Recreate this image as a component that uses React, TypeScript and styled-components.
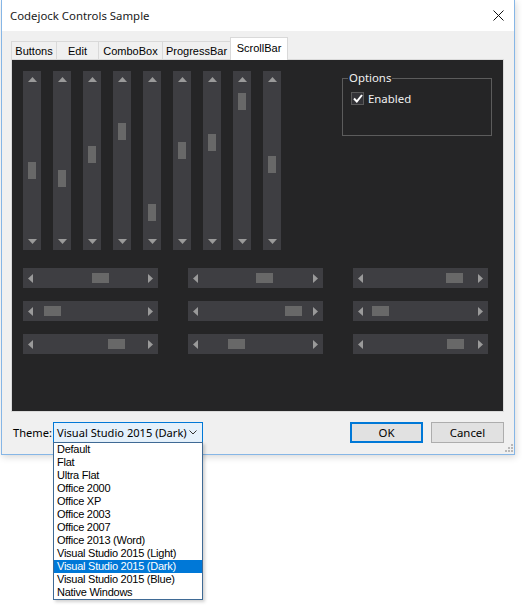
import React from "react";
import styled, { createGlobalStyle } from "styled-components";

const GlobalStyle = createGlobalStyle`
  html, body { margin: 0; padding: 0; background: #ffffff; }
  body { font-family: "Noto Sans", "Liberation Sans", sans-serif; }
`;

const UI = `"Noto Sans", "Open Sans", sans-serif`;
const DLG = `"Liberation Sans", Arial, sans-serif`;

const Page = styled.div`
  padding-left: 1px;
  min-height: 608px;
  box-sizing: border-box;
`;

const Window = styled.div`
  position: relative;
  width: 512px;
  border: 1px solid #86b6e6;
  border-top: none;
  background: #f0f0f0;
  box-shadow: 1px 2px 7px rgba(0, 0, 0, 0.16);
`;

const TitleBar = styled.div`
  height: 31px;
  background: #ffffff;
  display: flex;
  align-items: center;
  justify-content: space-between;
  padding: 0 10px 0 8px;
`;

const Title = styled.span`
  font-family: ${UI};
  font-size: 11.4px;
  color: #1a1a1a;
`;

const CloseGlyph = styled.svg`
  width: 11px;
  height: 11px;
  display: block;
`;

const Body = styled.div`
  padding: 6px 10px 0 9px;
`;

const TabStrip = styled.div`
  display: flex;
  align-items: flex-end;
  height: 23px;
  position: relative;
  z-index: 1;
  margin-bottom: -1px;
`;

const Tab = styled.div<{ $w: number; $active?: boolean }>`
  width: ${(p) => p.$w}px;
  height: ${(p) => (p.$active ? 23 : 19)}px;
  box-sizing: border-box;
  border: 1px solid #d9d9d9;
  border-left-width: ${(p) => (p.$active ? 1 : 0)}px;
  border-bottom: ${(p) => (p.$active ? "none" : "1px solid #d9d9d9")};
  background: ${(p) => (p.$active ? "#ffffff" : "#f0f0f0")};
  margin: ${(p) => (p.$active ? "0 -1px 0 -1px" : "0")};
  font-family: ${DLG};
  font-size: 11px;
  color: #000;
  display: flex;
  align-items: center;
  justify-content: center;
  padding-bottom: ${(p) => (p.$active ? 3 : 0)}px;
  &:first-child {
    border-left-width: 1px;
  }
`;

const TabPanel = styled.div`
  border: 1px solid #dadada;
  background: #ffffff;
`;

const DarkArea = styled.div`
  height: 351px;
  background: #252526;
  box-sizing: border-box;
  padding: 11px 0 0 11px;
  display: flex;
  flex-direction: column;
  gap: 18px;
`;

const TopRow = styled.div`
  display: flex;
  align-items: flex-start;
`;

const VGroup = styled.div`
  display: flex;
  gap: 12px;
`;

const VBar = styled.div`
  width: 18px;
  height: 179px;
  background: #3e3e42;
  display: flex;
  flex-direction: column;
`;

const ArrowBox = styled.div<{ $dir: "v" | "h" }>`
  flex: 0 0 ${(p) => (p.$dir === "v" ? 17 : 15)}px;
  display: flex;
  align-items: center;
  justify-content: center;
`;

const Track = styled.div`
  flex: 1;
  position: relative;
`;

const VThumb = styled.div`
  position: absolute;
  left: 5px;
  width: 8px;
  height: 17px;
  background: #686868;
`;

const HBar = styled.div`
  width: 135px;
  height: 20px;
  background: #3e3e42;
  display: flex;
`;

const HThumb = styled.div`
  position: absolute;
  top: 5px;
  width: 17px;
  height: 10px;
  background: #686868;
`;

const HGrid = styled.div`
  display: grid;
  grid-template-columns: repeat(3, 135px);
  column-gap: 30px;
  row-gap: 13px;
`;

const Group = styled.fieldset`
  margin: 0 0 0 61px;
  width: 150px;
  height: 65px;
  box-sizing: border-box;
  border: 1px solid #5c5c5c;
  padding: 6px 0 0 5px;
  min-width: 0;
`;

const Legend = styled.legend`
  font-family: ${UI};
  font-size: 11.4px;
  line-height: 14px;
  color: #f1f1f1;
  padding: 0 1px;
  margin-left: 0;
`;

const CheckRow = styled.label`
  display: flex;
  align-items: center;
  gap: 4px;
  margin-left: 3px;
  font-family: ${UI};
  font-size: 11.4px;
  color: #f1f1f1;
`;

const CheckBox = styled.span`
  width: 13px;
  height: 13px;
  box-sizing: border-box;
  border: 1px solid #5a5a5a;
  background: #333337;
  display: flex;
  align-items: center;
  justify-content: center;
`;

const BottomBar = styled.div`
  display: flex;
  align-items: center;
  padding: 10px 0 11px 2px;
  height: 21px;
  box-sizing: content-box;
`;

const Label = styled.span`
  flex: 0 0 40px;
  font-family: ${UI};
  font-size: 11.1px;
  color: #000;
`;

const ComboWrap = styled.div`
  position: relative;
  flex: 0 0 150px;
  height: 21px;
`;

const Combo = styled.div`
  height: 100%;
  box-sizing: border-box;
  border: 1px solid #0078d7;
  background: #e5f1fb;
  display: flex;
  align-items: center;
  justify-content: space-between;
  padding: 0 5px 0 3px;
  font-family: ${UI};
  font-size: 11.1px;
  white-space: nowrap;
  color: #000;
`;

const List = styled.div`
  position: absolute;
  left: 0;
  top: 20px;
  width: 150px;
  box-sizing: border-box;
  border: 1px solid #3f6a95;
  background: #ffffff;
  box-shadow: 2px 2px 3px rgba(0, 0, 0, 0.18);
  z-index: 5;
`;

const ListItem = styled.div<{ $selected?: boolean }>`
  height: 13px;
  line-height: 13px;
  padding-left: 3px;
  font-family: ${DLG};
  font-size: 11px;
  letter-spacing: -0.25px;
  white-space: nowrap;
  background: ${(p) => (p.$selected ? "#0078d7" : "transparent")};
  color: ${(p) => (p.$selected ? "#ffffff" : "#000000")};
`;

const Spacer = styled.div`
  flex: 1;
`;

const Button = styled.div<{ $default?: boolean }>`
  width: 73px;
  height: 21px;
  box-sizing: border-box;
  border: ${(p) => (p.$default ? "2px solid #0078d7" : "1px solid #adadad")};
  background: #e1e1e1;
  display: flex;
  align-items: center;
  justify-content: center;
  font-family: ${UI};
  font-size: 11.4px;
  color: #000;
  margin-left: 8px;
`;

const Grip = styled.svg`
  position: absolute;
  right: 1px;
  bottom: 2px;
  width: 8px;
  height: 8px;
`;

const ARROW = "#9a9a9a";

const Up = () => (
  <svg width="9" height="5" viewBox="0 0 9 5">
    <polygon points="4.5,0 9,5 0,5" fill={ARROW} />
  </svg>
);
const Down = () => (
  <svg width="9" height="5" viewBox="0 0 9 5">
    <polygon points="0,0 9,0 4.5,5" fill={ARROW} />
  </svg>
);
const Left = () => (
  <svg width="5" height="9" viewBox="0 0 5 9">
    <polygon points="5,0 5,9 0,4.5" fill={ARROW} />
  </svg>
);
const Right = () => (
  <svg width="5" height="9" viewBox="0 0 5 9">
    <polygon points="0,0 5,4.5 0,9" fill={ARROW} />
  </svg>
);

const verticalOffsets = [91, 99, 75, 52, 133, 71, 63, 22, 85];
const horizontalOffsets = [69, 68, 93, 21, 97, 19, 85, 40, 94];

const tabs = [
  { label: "Buttons", w: 46 },
  { label: "Edit", w: 42 },
  { label: "ComboBox", w: 64 },
  { label: "ProgressBar", w: 68 },
  { label: "ScrollBar", w: 58, active: true },
];

const themes = [
  "Default",
  "Flat",
  "Ultra Flat",
  "Office 2000",
  "Office XP",
  "Office 2003",
  "Office 2007",
  "Office 2013 (Word)",
  "Visual Studio 2015 (Light)",
  "Visual Studio 2015 (Dark)",
  "Visual Studio 2015 (Blue)",
  "Native Windows",
];

function VerticalScroll({ pos }: { pos: number }) {
  return (
    <VBar>
      <ArrowBox $dir="v">
        <Up />
      </ArrowBox>
      <Track>
        <VThumb style={{ top: pos - 17 }} />
      </Track>
      <ArrowBox $dir="v">
        <Down />
      </ArrowBox>
    </VBar>
  );
}

function HorizontalScroll({ pos }: { pos: number }) {
  return (
    <HBar>
      <ArrowBox $dir="h">
        <Left />
      </ArrowBox>
      <Track>
        <HThumb style={{ left: pos - 15 }} />
      </Track>
      <ArrowBox $dir="h">
        <Right />
      </ArrowBox>
    </HBar>
  );
}

export default function App() {
  return (
    <Page>
      <GlobalStyle />
      <Window>
        <TitleBar>
          <Title>Codejock Controls Sample</Title>
          <CloseGlyph viewBox="0 0 11 11">
            <path d="M0.5 0.5 L10.5 10.5 M10.5 0.5 L0.5 10.5" stroke="#111" strokeWidth="1" />
          </CloseGlyph>
        </TitleBar>
        <Body>
          <TabStrip>
            {tabs.map((t) => (
              <Tab key={t.label} $w={t.w} $active={t.active}>
                {t.label}
              </Tab>
            ))}
          </TabStrip>
          <TabPanel>
            <DarkArea>
              <TopRow>
                <VGroup>
                  {verticalOffsets.map((p, i) => (
                    <VerticalScroll key={i} pos={p} />
                  ))}
                </VGroup>
                <Group>
                  <Legend>Options</Legend>
                  <CheckRow>
                    <CheckBox>
                      <svg width="10" height="9" viewBox="0 0 10 9">
                        <path d="M1 4.5 L3.8 7.5 L9 1" stroke="#ffffff" strokeWidth="2" fill="none" />
                      </svg>
                    </CheckBox>
                    Enabled
                  </CheckRow>
                </Group>
              </TopRow>
              <HGrid>
                {horizontalOffsets.map((p, i) => (
                  <HorizontalScroll key={i} pos={p} />
                ))}
              </HGrid>
            </DarkArea>
          </TabPanel>
          <BottomBar>
            <Label>Theme:</Label>
            <ComboWrap>
              <Combo>
                <span>Visual Studio 2015 (Dark)</span>
                <svg width="8" height="5" viewBox="0 0 8 5">
                  <path d="M0.5 0.5 L4 4 L7.5 0.5" stroke="#333" strokeWidth="1" fill="none" />
                </svg>
              </Combo>
              <List>
                {themes.map((t) => (
                  <ListItem key={t} $selected={t === "Visual Studio 2015 (Dark)"}>
                    {t}
                  </ListItem>
                ))}
              </List>
            </ComboWrap>
            <Spacer />
            <Button $default>OK</Button>
            <Button>Cancel</Button>
          </BottomBar>
        </Body>
        <Grip viewBox="0 0 8 8">
          {[
            [6, 0],
            [6, 3],
            [3, 3],
            [6, 6],
            [3, 6],
            [0, 6],
          ].map(([x, y], i) => (
            <rect key={i} x={x} y={y} width="2" height="2" fill="#b8b8b8" />
          ))}
        </Grip>
      </Window>
    </Page>
  );
}
